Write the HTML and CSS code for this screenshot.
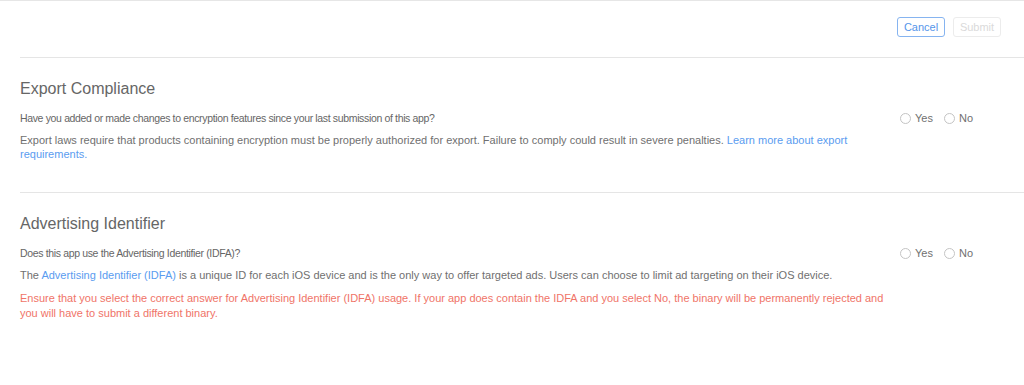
FILE: index.html
```html
<!DOCTYPE html>
<html lang="en">
<head>
  <meta charset="UTF-8">
  <title>Submit for Review</title>
  <link rel="stylesheet" href="styles.css">
</head>
<body>
  <div class="page">
    <div class="toolbar">
      <button class="btn cancel">Cancel</button>
      <button class="btn submit" disabled>Submit</button>
    </div>

    <div class="section">
      <div class="section-title">Export Compliance</div>
      <div class="row">
        <div class="text-col">
          <div class="question">Have you added or made changes to encryption features since your last submission of this app?</div>
          <div class="desc">Export laws require that products containing encryption must be properly authorized for export. Failure to comply could result in severe penalties. <a href="#" class="link">Learn more about export requirements.</a></div>
        </div>
        <div class="choices">
          <label class="choice"><span class="radio"></span>Yes</label>
          <label class="choice"><span class="radio"></span>No</label>
        </div>
      </div>
    </div>

    <div class="section">
      <div class="section-title">Advertising Identifier</div>
      <div class="row">
        <div class="text-col">
          <div class="question">Does this app use the Advertising Identifier (IDFA)?</div>
          <div class="desc">The <a href="#" class="link">Advertising Identifier (IDFA)</a> is a unique ID for each iOS device and is the only way to offer targeted ads. Users can choose to limit ad targeting on their iOS device.</div>
          <div class="warning">Ensure that you select the correct answer for Advertising Identifier (IDFA) usage. If your app does contain the IDFA and you select No, the binary will be permanently rejected and you will have to submit a different binary.</div>
        </div>
        <div class="choices">
          <label class="choice"><span class="radio"></span>Yes</label>
          <label class="choice"><span class="radio"></span>No</label>
        </div>
      </div>
    </div>
  </div>
</body>
</html>
```

FILE: styles.css
```css
body {
  margin: 0;
  font-family: "Liberation Sans", Arial, sans-serif;
  color: #6f6f6f;
  background-color: #fff;
}

.page {
  border-top: 1px solid #e6e6e6;
  padding-left: 20px;
}

.toolbar {
  display: flex;
  justify-content: flex-end;
  gap: 8px;
  padding: 16px 23px 20px 0;
  border-bottom: 1px solid #e5e5e5;
}

.btn {
  font-family: inherit;
  font-size: 11px;
  height: 20px;
  width: 48px;
  padding: 0;
  background: #fff;
  border-radius: 3px;
}

.cancel {
  color: #5595ea;
  border: 1px solid #86b4f0;
}

.submit {
  color: #dadada;
  border: 1px solid #ececec;
}

.section {
  padding: 22px 0 31px;
  border-bottom: 1px solid #e5e5e5;
}

.section:last-child {
  border-bottom: none;
}

.section-title {
  font-size: 16px;
  color: #666;
  margin-bottom: 14px;
}

.row {
  display: flex;
}

.text-col {
  width: 872px;
}

.question {
  font-size: 10.5px;
  letter-spacing: -0.35px;
  line-height: 13px;
  color: #666;
  margin-bottom: 8px;
}

.desc {
  font-size: 11px;
  line-height: 14px;
  color: #707070;
}

.link {
  color: #5a9cf0;
  text-decoration: none;
}

.warning {
  font-size: 11px;
  line-height: 15px;
  color: #f07468;
  margin-top: 9px;
}

.choices {
  display: flex;
  gap: 11px;
  margin-top: -1px;
  margin-left: 8px;
  font-size: 11px;
  color: #707070;
}

.choice {
  display: flex;
  align-items: center;
  height: 14px;
}

.radio {
  width: 9px;
  height: 9px;
  border: 1px solid #c4c4c4;
  border-radius: 50%;
  margin-right: 4px;
}
```
